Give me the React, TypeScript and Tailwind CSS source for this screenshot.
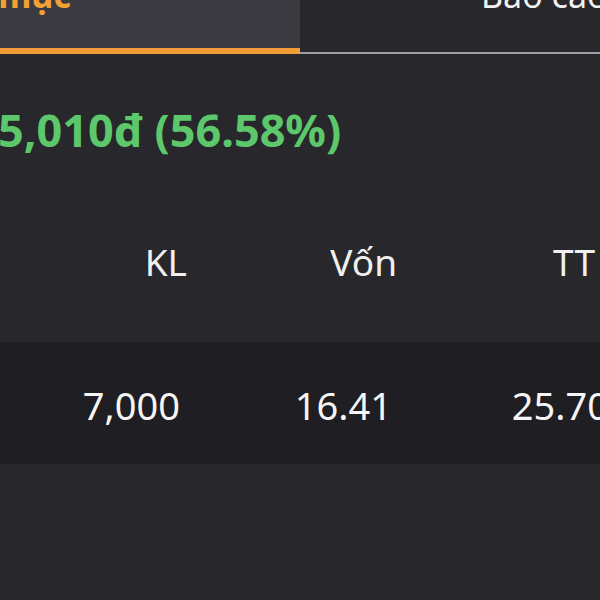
import React from "react";

const font = { fontFamily: '"Noto Sans", "Open Sans", sans-serif' };

export default function App() {
  return (
    <div
      className="w-[600px] h-[600px] overflow-hidden bg-[#28272c] text-[#f2f2f2]"
      style={font}
    >
      {/* Tabs */}
      <div className="flex h-[54px]">
        <div className="w-[300px] shrink-0 bg-[#3b3a40] border-b-[6px] border-[#f09d38] flex flex-col">
          <div className="w-[71px] flex justify-end whitespace-nowrap -mt-[22px] text-[34px] leading-[34px] font-bold text-[#f3a035]">
            Danh mục
          </div>
        </div>
        <div className="flex-1 border-b-2 border-[#9c9ca3] flex flex-col">
          <div className="pl-[181px] whitespace-nowrap -mt-[22px] text-[34px] leading-[34px] text-[#f2f2f2]">
            Báo cáo
          </div>
        </div>
      </div>

      {/* Profit */}
      <div className="mt-[53px] -ml-[2px] whitespace-nowrap text-[45px] leading-[45px] font-bold text-[#5cc86b]">
        5,010đ (56.58%)
      </div>

      {/* Header row */}
      <div className="mt-[91px] grid grid-cols-[187px_210px_198px] text-[37px] leading-[37px] text-[#f0f0f0] whitespace-nowrap">
        <div className="text-right">KL</div>
        <div className="text-right">Vốn</div>
        <div className="text-right">TT</div>
      </div>

      {/* Data row */}
      <div className="mt-[62px] h-[122px] bg-[#1f1e22] grid grid-cols-[180px_212px_217px] items-center pt-[4px] text-[38px] leading-[38px] text-[#f5f5f5] whitespace-nowrap">
        <div className="text-right">7,000</div>
        <div className="text-right">16.41</div>
        <div className="text-right">25.70</div>
      </div>
    </div>
  );
}
